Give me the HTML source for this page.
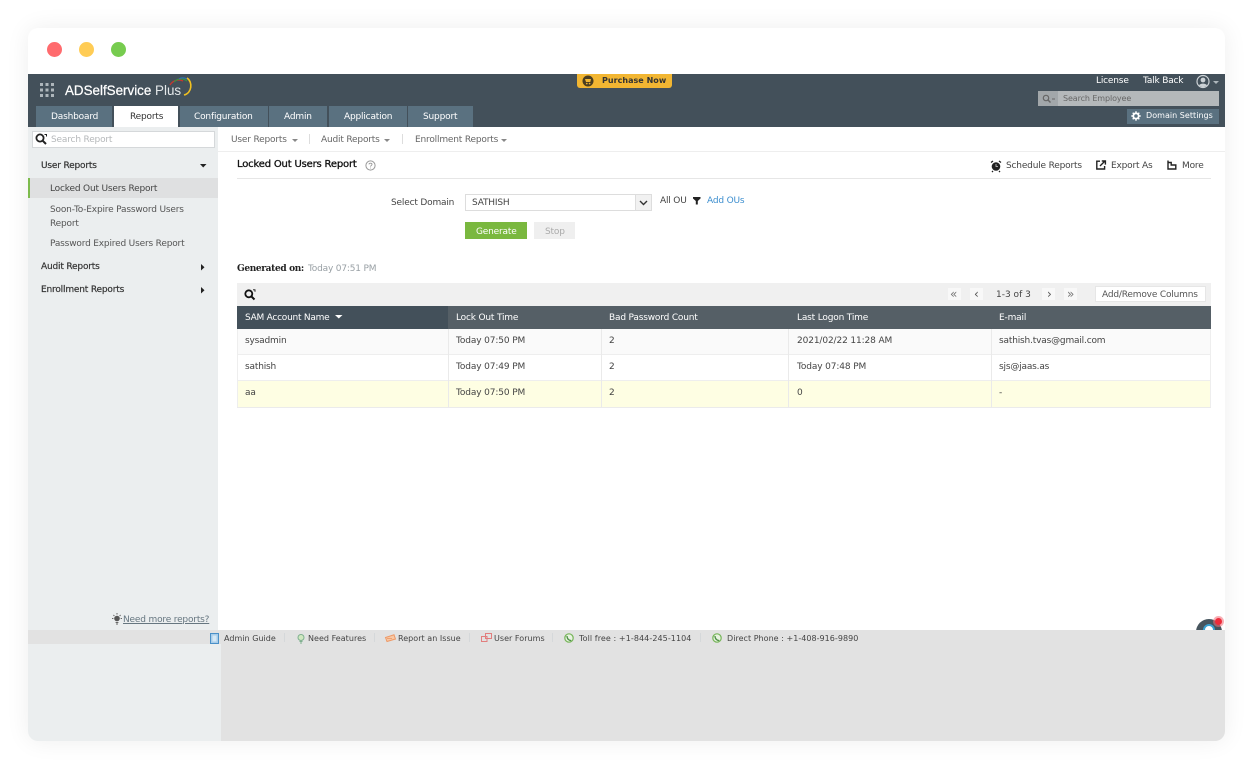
<!DOCTYPE html>
<html><head><meta charset="utf-8">
<style>
html,body{margin:0;padding:0;width:1254px;height:766px;background:#fff;overflow:hidden}
#w{position:absolute;left:28px;top:28px;width:1197px;height:713px;background:#fff;border-radius:10px;box-shadow:0 0 24px rgba(0,0,0,.07);overflow:hidden}
.b{position:absolute}
.t{position:absolute;white-space:nowrap;font-family:"DejaVu Sans","Liberation Sans",sans-serif;font-size:9px;line-height:12px;color:#444;letter-spacing:-.18px;margin-top:1px}
.f{font-size:8px;letter-spacing:.03px}
.h{-webkit-text-stroke:.2px #333}
svg{position:absolute;overflow:visible}
</style></head><body>
<div id="w"></div>
<div class="b" style="left:28px;top:28px;width:1197px;height:713px;border-radius:10px;overflow:hidden">
<div style="position:absolute;left:-28px;top:-28px;width:1254px;height:766px">
<div class="b" style="left:47px;top:42px;width:15px;height:15px;border-radius:50%;background:#ff6b6e"></div>
<div class="b" style="left:79px;top:42px;width:15px;height:15px;border-radius:50%;background:#ffcc55"></div>
<div class="b" style="left:111px;top:42px;width:15px;height:15px;border-radius:50%;background:#77cc4f"></div>

<div class="b" style="left:28px;top:74px;width:1197px;height:53px;background:#43505a"></div>
<div class="b" style="left:28px;top:127px;width:190px;height:503px;background:#ebeeef"></div>
<div class="b" style="left:28px;top:630px;width:1197px;height:14px;background:#e2e2e2"></div>
<div class="b" style="left:28px;top:644px;width:193px;height:97px;background:#ebeeef"></div>
<div class="b" style="left:221px;top:644px;width:1004px;height:97px;background:#e2e2e2"></div>

<svg style="left:40px;top:83px" width="14" height="14" fill="#aeb6bb"><rect x="0" y="0" width="3" height="3"/><rect x="5.5" y="0" width="3" height="3"/><rect x="11" y="0" width="3" height="3"/><rect x="0" y="5.5" width="3" height="3"/><rect x="5.5" y="5.5" width="3" height="3"/><rect x="11" y="5.5" width="3" height="3"/><rect x="0" y="11" width="3" height="3"/><rect x="5.5" y="11" width="3" height="3"/><rect x="11" y="11" width="3" height="3"/></svg>
<div class="t" style="left:65px;top:82px;font-family:'Liberation Sans',sans-serif;font-size:13.4px;line-height:16px;letter-spacing:0;color:#fff;-webkit-text-stroke:.25px #fff">ADSelfService <span style="color:#e4e8ea;-webkit-text-stroke:0">Plus</span></div>
<svg style="left:168px;top:76px" width="28" height="24" fill="none"><path d="M2 9C5 4 11 3 15 5" stroke="#c8372d" stroke-width="1.3"/><path d="M6 6C10 2 15 2 19 5" stroke="#3a8f3f" stroke-width="1.2"/><path d="M11 3C14 1 17 2 19 3" stroke="#2d6fb5" stroke-width="1.1"/><path d="M19 2C25 6 24 17 16 19" stroke="#f0c020" stroke-width="1.6"/></svg>

<div class="b" style="left:36px;top:106px;width:76px;height:21px;background:#5a7180"></div>
<div class="b" style="left:114px;top:106px;width:64px;height:21px;background:#fff"></div>
<div class="b" style="left:180px;top:106px;width:88px;height:21px;background:#5a7180"></div>
<div class="b" style="left:269px;top:106px;width:58px;height:21px;background:#5a7180"></div>
<div class="b" style="left:329px;top:106px;width:78px;height:21px;background:#5a7180"></div>
<div class="b" style="left:408px;top:106px;width:65px;height:21px;background:#5a7180"></div>
<div class="t" style="left:51px;top:110px;color:#fff">Dashboard</div>
<div class="t" style="left:130px;top:110px;color:#333">Reports</div>
<div class="t" style="left:194px;top:110px;color:#fff">Configuration</div>
<div class="t" style="left:284px;top:110px;color:#fff">Admin</div>
<div class="t" style="left:344px;top:110px;color:#fff">Application</div>
<div class="t" style="left:423px;top:110px;color:#fff">Support</div>

<div class="b" style="left:577px;top:74px;width:95px;height:14px;background:#f2b632;border-radius:0 0 3px 3px"></div>
<svg style="left:582px;top:75px" width="12" height="12"><circle cx="6" cy="6" r="5.5" fill="#4a3d20"/><path d="M3 4H9L8.3 7H4Z" fill="#f2b632"/><circle cx="4.8" cy="8.6" r=".8" fill="#f2b632"/><circle cx="7.6" cy="8.6" r=".8" fill="#f2b632"/></svg>
<div class="t f" style="left:602px;top:74px;font-weight:bold;color:#333">Purchase Now</div>

<div class="t" style="left:1096px;top:74px;color:#fff">License</div>
<div class="t" style="left:1143px;top:74px;color:#fff">Talk Back</div>
<svg style="left:1196px;top:75px" width="24" height="14"><circle cx="7" cy="6.5" r="6" fill="none" stroke="#ccd2d6" stroke-width="1.2"/><circle cx="7" cy="5" r="2.4" fill="#ccd2d6"/><path d="M3 10.5C4 8 10 8 11 10.5L7 12.5Z" fill="#ccd2d6"/><path d="M17 6H23L20 9Z" fill="#aeb6bb"/></svg>
<div class="b" style="left:1038px;top:91px;width:181px;height:15px;background:#b4b8ba"></div>
<div class="b" style="left:1038px;top:91px;width:20px;height:15px;background:#a2a7aa"></div>
<svg style="left:1042px;top:94px" width="14" height="10" fill="none" stroke="#666"><circle cx="4" cy="4" r="2.7" stroke-width="1.2"/><path d="M6 6L8.5 8.5" stroke-width="1.4"/><path d="M10 5H13" stroke-width="1"/></svg>
<div class="t f" style="left:1063px;top:92px;color:#666;letter-spacing:-.1px">Search Employee</div>
<div class="b" style="left:1127px;top:109px;width:92px;height:15px;background:#5a7180"></div>
<svg style="left:1131px;top:110.5px" width="10" height="10"><circle cx="5" cy="5" r="2.7" fill="none" stroke="#fff" stroke-width="1.8"/><path d="M5 .3V2.5M5 7.5V9.7M.3 5H2.5M7.5 5H9.7M1.7 1.7L3 3M7 7L8.3 8.3M1.7 8.3L3 7M7 3L8.3 1.7" stroke="#fff" stroke-width="1.4"/></svg>
<div class="t f" style="left:1146px;top:109px;color:#fff">Domain Settings</div>

<div class="b" style="left:32px;top:131px;width:181px;height:15px;background:#fff;border:1px solid #d5d8da"></div>
<svg style="left:35px;top:133px" width="13" height="13" fill="none" stroke="#222"><circle cx="5" cy="5" r="3.6" stroke-width="1.8"/><path d="M7.8 7.8L11 11" stroke-width="2"/><path d="M9.5 1.5H11.5V3.5" stroke-width="1"/></svg>
<div class="t" style="left:51px;top:133px;color:#b5b8ba">Search Report</div>

<div class="b" style="left:218px;top:151px;width:1007px;height:1px;background:#eee"></div>
<div class="t" style="left:231px;top:133px;color:#666">User Reports</div>
<svg style="left:292px;top:139px" width="7" height="4"><path d="M0 0H6L3 3Z" fill="#888"/></svg>
<div class="b" style="left:309px;top:134px;width:1px;height:10px;background:#ddd"></div>
<div class="t" style="left:321px;top:133px;color:#666">Audit Reports</div>
<svg style="left:384px;top:139px" width="7" height="4"><path d="M0 0H6L3 3Z" fill="#888"/></svg>
<div class="b" style="left:402px;top:134px;width:1px;height:10px;background:#ddd"></div>
<div class="t" style="left:415px;top:133px;color:#666">Enrollment Reports</div>
<svg style="left:501px;top:139px" width="7" height="4"><path d="M0 0H6L3 3Z" fill="#888"/></svg>

<div class="t h" style="left:41px;top:159px;color:#333">User Reports</div>
<svg style="left:200px;top:164px" width="7" height="4"><path d="M0 0H6.5L3.2 3.5Z" fill="#222"/></svg>
<div class="b" style="left:28px;top:178px;width:190px;height:20px;background:#dfe0e1"></div>
<div class="b" style="left:28px;top:178px;width:2px;height:20px;background:#7dbb4d"></div>
<div class="t" style="left:50px;top:182px;color:#444">Locked Out Users Report</div>
<div class="t" style="left:50px;top:203px;color:#555">Soon-To-Expire Password Users</div>
<div class="t" style="left:50px;top:217px;color:#555">Report</div>
<div class="t" style="left:50px;top:237px;color:#555">Password Expired Users Report</div>
<div class="t h" style="left:41px;top:260px;color:#333">Audit Reports</div>
<svg style="left:201px;top:264px" width="5" height="7"><path d="M0 0V6.5L3.5 3.2Z" fill="#222"/></svg>
<div class="t h" style="left:41px;top:283px;color:#333">Enrollment Reports</div>
<svg style="left:201px;top:287px" width="5" height="7"><path d="M0 0V6.5L3.5 3.2Z" fill="#222"/></svg>

<svg style="left:111px;top:613px" width="12" height="12"><circle cx="6" cy="5.5" r="2.8" fill="#555"/><path d="M6 0V1.5M1 5.5H2.4M9.6 5.5H11M2.4 2L3.4 3M9.6 2L8.6 3M4.6 9.5H7.4M5 11H7" stroke="#666" stroke-width="1"/></svg>
<div class="t" style="left:123px;top:613px;color:#667680;text-decoration:underline">Need more reports?</div>

<div class="t" style="left:237px;top:158px;font-size:10px;letter-spacing:-.18px;color:#111;-webkit-text-stroke:.3px #111">Locked Out Users Report</div>
<svg style="left:365px;top:160px" width="11" height="11" fill="none"><circle cx="5.5" cy="5.5" r="4.6" stroke="#999"/><path d="M4 4.4C4 2.8 7 2.8 7 4.4C7 5.5 5.5 5.4 5.5 6.6M5.5 7.6V8.4" stroke="#999" stroke-width=".9"/></svg>
<div class="b" style="left:237px;top:178px;width:974px;height:1px;background:#e6e6e6"></div>

<svg style="left:990px;top:160px" width="12" height="12"><circle cx="6" cy="6.5" r="4.3" fill="#222"/><path d="M1 2.5L3 1M11 2.5L9 1M3 11L2 12M9 11L10 12" stroke="#222" stroke-width="1.3"/><path d="M6 4V6.5H8" stroke="#ccc" stroke-width=".8" fill="none"/></svg>
<div class="t" style="left:1006px;top:159px;color:#444">Schedule Reports</div>
<svg style="left:1096px;top:160px" width="11" height="11" fill="none" stroke="#222" stroke-width="1.4"><path d="M4 1.2H.8V9H8.6V6"/><path d="M4 6L8.5 1.5M5.8 1H9.4V4.6"/></svg>
<div class="t" style="left:1111px;top:159px;color:#444">Export As</div>
<svg style="left:1167px;top:160px" width="11" height="11" fill="none" stroke="#222" stroke-width="1.4"><path d="M1 .5V9H8.8V5H4.2V2.5H1"/></svg>
<div class="t" style="left:1182px;top:159px;color:#444">More</div>

<div class="t" style="left:391px;top:196px;color:#444">Select Domain</div>
<div class="b" style="left:465px;top:194px;width:185px;height:15px;background:#fff;border:1px solid #ddd"></div>
<div class="b" style="left:635px;top:195px;width:15px;height:15px;background:#f1f1f1;border-left:1px solid #ddd"></div>
<svg style="left:639px;top:200px" width="9" height="6" fill="none"><path d="M1 1L4.5 4.5L8 1" stroke="#333" stroke-width="1.4"/></svg>
<div class="t" style="left:472px;top:196px;color:#444">SATHISH</div>
<div class="t" style="left:660px;top:194px;color:#444">All OU</div>
<svg style="left:693px;top:197px" width="8" height="8"><path d="M0 0H7.5V1.5L4.8 4V7.5H2.8V4L0 1.5Z" fill="#222"/></svg>
<div class="t" style="left:707px;top:194px;color:#3e8fcf">Add OUs</div>
<div class="b" style="left:465px;top:222px;width:62px;height:17px;background:#7ab83f"></div>
<div class="t" style="left:476px;top:225px;color:#fff">Generate</div>
<div class="b" style="left:534px;top:222px;width:41px;height:17px;background:#efefef"></div>
<div class="t" style="left:545px;top:225px;color:#aaa">Stop</div>

<div class="t" style="left:237px;top:262px;color:#222;font-weight:bold;letter-spacing:-.35px;font-family:'DejaVu Serif','Liberation Serif',serif">Generated on:</div>
<div class="t" style="left:308px;top:262px;color:#99a0a5">Today 07:51 PM</div>

<div class="b" style="left:237px;top:283px;width:974px;height:23px;background:#f0f0f0"></div>
<svg style="left:244px;top:289px" width="12" height="12" fill="none" stroke="#111"><circle cx="4.8" cy="4.8" r="3.5" stroke-width="1.8"/><path d="M7.5 7.5L10.5 10.5" stroke-width="2"/><path d="M9 0.8H11V2.8" stroke-width=".9"/></svg>
<div class="b" style="left:948px;top:288px;width:13px;height:12px;background:#f8f8f8"></div>
<div class="t" style="left:950px;top:287px;color:#777;font-size:12px">«</div>
<div class="b" style="left:970px;top:288px;width:13px;height:12px;background:#f8f8f8"></div>
<div class="t" style="left:974px;top:287px;color:#555;font-size:12px">‹</div>
<div class="t" style="left:996px;top:288px;color:#444;letter-spacing:0">1-3 of 3</div>
<div class="b" style="left:1042px;top:288px;width:13px;height:12px;background:#f8f8f8"></div>
<div class="t" style="left:1047px;top:287px;color:#555;font-size:12px">›</div>
<div class="b" style="left:1064px;top:288px;width:13px;height:12px;background:#f8f8f8"></div>
<div class="t" style="left:1067px;top:287px;color:#777;font-size:12px">»</div>
<div class="b" style="left:1095px;top:286px;width:109px;height:14px;background:#fff;border:1px solid #e6e6e6"></div>
<div class="t" style="left:1102px;top:288px;color:#555">Add/Remove Columns</div>

<div class="b" style="left:237px;top:306px;width:974px;height:23px;background:#555f66"></div>
<div class="b" style="left:237px;top:306px;width:211px;height:23px;background:#43505a"></div>
<div class="t" style="left:245px;top:311px;color:#fff;letter-spacing:-.25px">SAM Account Name</div>
<svg style="left:335px;top:315px" width="8" height="4"><path d="M0 0H7.5L3.8 3.5Z" fill="#fff"/></svg>
<div class="t" style="left:456px;top:311px;color:#fff">Lock Out Time</div>
<div class="t" style="left:609px;top:311px;color:#fff">Bad Password Count</div>
<div class="t" style="left:797px;top:311px;color:#fff">Last Logon Time</div>
<div class="t" style="left:999px;top:311px;color:#fff">E-mail</div>

<div class="b" style="left:237px;top:329px;width:974px;height:25px;background:#fafafa"></div>
<div class="b" style="left:237px;top:354px;width:974px;height:1px;background:#eee"></div>
<div class="b" style="left:237px;top:355px;width:974px;height:25px;background:#fff"></div>
<div class="b" style="left:237px;top:380px;width:974px;height:1px;background:#eee"></div>
<div class="b" style="left:237px;top:381px;width:974px;height:26px;background:#fefee3"></div>
<div class="b" style="left:237px;top:407px;width:974px;height:1px;background:#ebebeb"></div>
<div class="b" style="left:237px;top:329px;width:1px;height:78px;background:#eee"></div>
<div class="b" style="left:448px;top:329px;width:1px;height:78px;background:#eaeaea"></div>
<div class="b" style="left:601px;top:329px;width:1px;height:78px;background:#eaeaea"></div>
<div class="b" style="left:788px;top:329px;width:1px;height:78px;background:#eaeaea"></div>
<div class="b" style="left:991px;top:329px;width:1px;height:78px;background:#eaeaea"></div>
<div class="b" style="left:1210px;top:329px;width:1px;height:78px;background:#eee"></div>

<div class="t" style="left:245px;top:334px">sysadmin</div>
<div class="t" style="left:456px;top:334px;letter-spacing:-.12px">Today 07:50 PM</div>
<div class="t" style="left:609px;top:334px">2</div>
<div class="t" style="left:797px;top:334px;letter-spacing:-.12px">2021/02/22 11:28 AM</div>
<div class="t" style="left:999px;top:334px">sathish.tvas@gmail.com</div>
<div class="t" style="left:245px;top:360px">sathish</div>
<div class="t" style="left:456px;top:360px;letter-spacing:-.12px">Today 07:49 PM</div>
<div class="t" style="left:609px;top:360px">2</div>
<div class="t" style="left:797px;top:360px;letter-spacing:-.12px">Today 07:48 PM</div>
<div class="t" style="left:999px;top:360px">sjs@jaas.as</div>
<div class="t" style="left:245px;top:386px">aa</div>
<div class="t" style="left:456px;top:386px;letter-spacing:-.12px">Today 07:50 PM</div>
<div class="t" style="left:609px;top:386px">2</div>
<div class="t" style="left:797px;top:386px">0</div>
<div class="t" style="left:999px;top:386px">-</div>

<svg style="left:210px;top:633px" width="10" height="11"><rect x=".5" y=".5" width="8" height="10" fill="#a8cdea" stroke="#4a90c8"/><rect x="2.5" y="2.5" width="4" height="6" fill="#d5e8f5"/></svg>
<div class="t f" style="left:224px;top:632px;color:#444">Admin Guide</div>
<div class="b" style="left:284px;top:633px;width:1px;height:9px;background:#d5d8da"></div>
<svg style="left:296px;top:633px" width="10" height="11"><circle cx="5" cy="4.5" r="3" fill="#cfe8c0" stroke="#7fb08f"/><path d="M3.5 8.5H6.5M4 10H6" stroke="#7fb08f"/></svg>
<div class="t f" style="left:308px;top:632px;color:#444">Need Features</div>
<div class="b" style="left:374px;top:633px;width:1px;height:9px;background:#d5d8da"></div>
<svg style="left:385px;top:634px" width="11" height="9"><path d="M.5 3.5L9 .8L10.5 5L2 7.5Z" fill="#f8c8a5" stroke="#ee9966"/><path d="M2 4.5H7" stroke="#ee9966" stroke-width=".8"/></svg>
<div class="t f" style="left:398px;top:632px;color:#444">Report an Issue</div>
<div class="b" style="left:469px;top:633px;width:1px;height:9px;background:#d5d8da"></div>
<svg style="left:481px;top:633px" width="11" height="11" fill="none" stroke="#e27e7e"><rect x="4.5" y=".5" width="6" height="5"/><rect x=".5" y="3.5" width="5.5" height="5"/></svg>
<div class="t f" style="left:494px;top:632px;color:#444">User Forums</div>
<div class="b" style="left:552px;top:633px;width:1px;height:9px;background:#d5d8da"></div>
<svg style="left:564px;top:633px" width="11" height="11"><circle cx="5" cy="5" r="4.2" fill="#e8f3e0" stroke="#77b55a" stroke-width="1.2"/><path d="M3 3C3 6 5 7.5 7.2 7.5" stroke="#4d8f47" stroke-width="1.3" fill="none"/></svg>
<div class="t f" style="left:579px;top:632px;color:#444;letter-spacing:.08px">Toll free : +1-844-245-1104</div>
<div class="b" style="left:700px;top:633px;width:1px;height:9px;background:#d5d8da"></div>
<svg style="left:712px;top:633px" width="11" height="11"><circle cx="5" cy="5" r="4.2" fill="#e8f3e0" stroke="#77b55a" stroke-width="1.2"/><path d="M3 3C3 6 5 7.5 7.2 7.5" stroke="#4d8f47" stroke-width="1.3" fill="none"/></svg>
<div class="t f" style="left:727px;top:632px;color:#444">Direct Phone : +1-408-916-9890</div>

<div class="b" style="left:1196px;top:619px;width:26px;height:11px;overflow:hidden"><div style="position:absolute;left:0;top:0;width:26px;height:26px;border-radius:50%;background:#47555e"></div><div style="position:absolute;left:7px;top:5px;width:8px;height:8px;border-radius:50%;background:#fff;border:2px solid #3aa0d0"></div></div>
<div class="b" style="left:1215px;top:618px;width:7px;height:7px;border-radius:50%;background:#ee2b3a;box-shadow:0 0 0 2px rgba(240,110,120,.55)"></div>
</div></div>
</body></html>
